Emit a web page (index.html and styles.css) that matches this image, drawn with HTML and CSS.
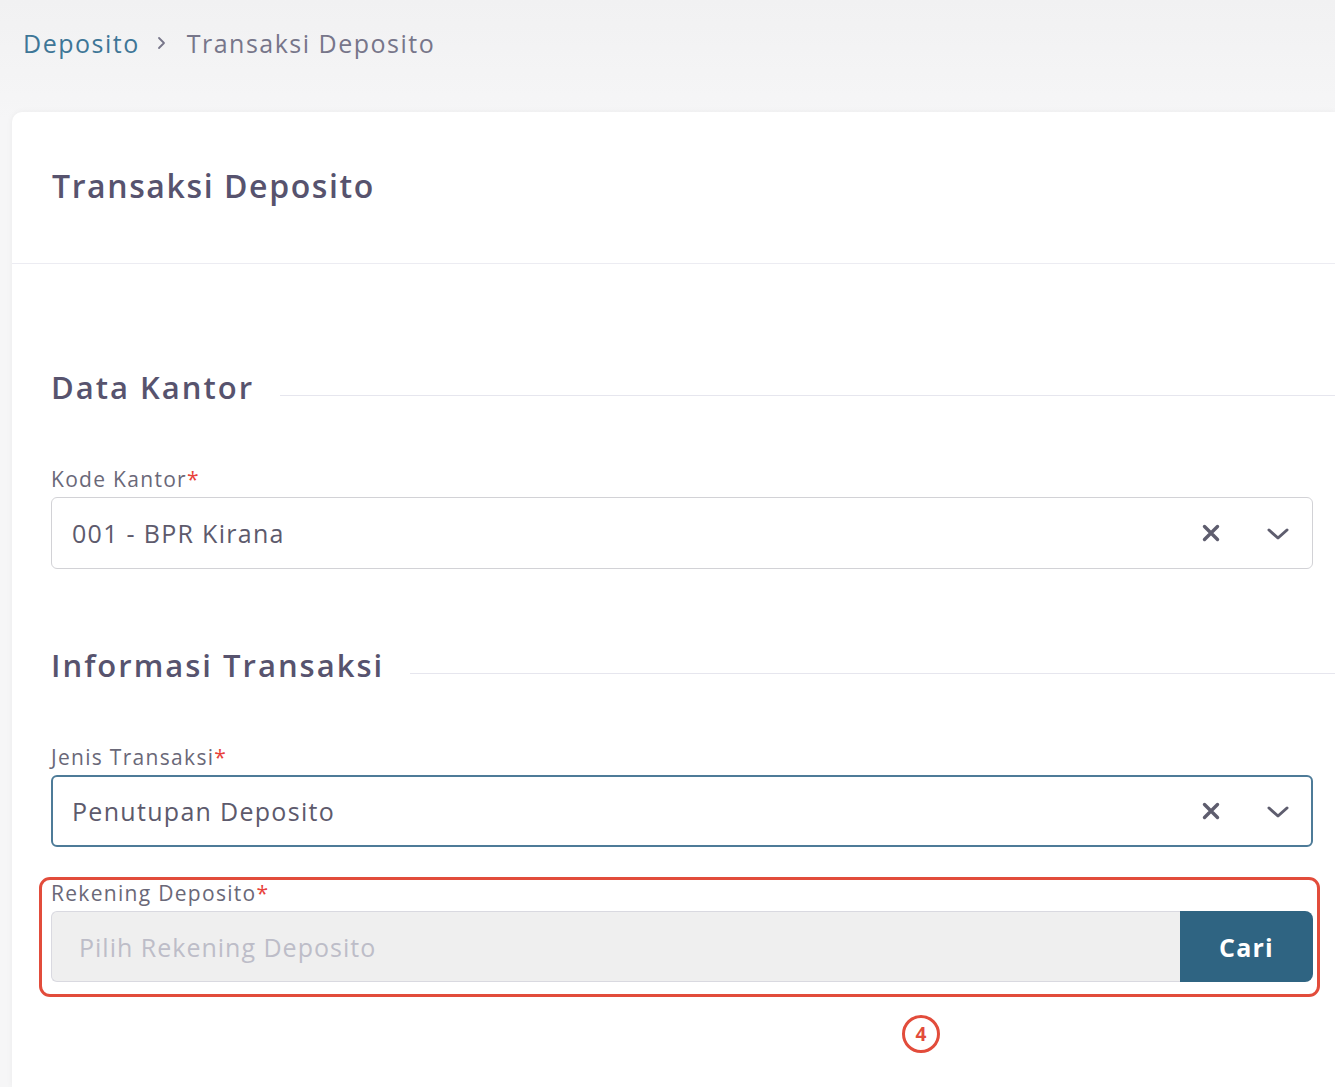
FILE: index.html
```html
<!DOCTYPE html>
<html lang="id">
<head>
<meta charset="utf-8">
<title>Transaksi Deposito</title>
<link rel="stylesheet" href="styles.css">
</head>
<body>
<div class="page">
  <nav class="crumbs">
    <a class="crumb-link" href="#">Deposito</a>
    <svg class="crumb-sep" width="12" height="14" viewBox="0 0 12 14"><path d="M3 2 L8 7 L3 12" fill="none" stroke="#77768a" stroke-width="1.8" stroke-linecap="round" stroke-linejoin="round"/></svg>
    <span class="crumb-current">Transaksi Deposito</span>
  </nav>
  <main class="card">
    <header class="card-head">
      <h1 class="card-title">Transaksi Deposito</h1>
    </header>
    <div class="card-body">
      <div class="section-title">
        <h2 class="section-name">Data Kantor</h2>
        <span class="section-rule"></span>
      </div>
      <div class="field field-first">
        <label class="field-label">Kode Kantor<span class="req">*</span></label>
        <div class="select">
          <span class="select-value">001 - BPR Kirana</span>
          <span class="select-icons">
            <svg class="ico-x" width="20" height="20" viewBox="0 0 20 20"><path d="M3.5 3.5 L16.5 16.5 M16.5 3.5 L3.5 16.5" stroke="#5e5d6e" stroke-width="3.4" stroke-linecap="round"/></svg>
            <svg class="ico-chev" width="24" height="16" viewBox="0 0 24 16"><path d="M3 4 L12 12 L21 4" fill="none" stroke="#5e5d6e" stroke-width="3" stroke-linecap="round" stroke-linejoin="round"/></svg>
          </span>
        </div>
      </div>

      <div class="section-title section-second">
        <h2 class="section-name">Informasi Transaksi</h2>
        <span class="section-rule"></span>
      </div>
      <div class="field field-first">
        <label class="field-label">Jenis Transaksi<span class="req">*</span></label>
        <div class="select select-focus">
          <span class="select-value">Penutupan Deposito</span>
          <span class="select-icons">
            <svg class="ico-x" width="20" height="20" viewBox="0 0 20 20"><path d="M3.5 3.5 L16.5 16.5 M16.5 3.5 L3.5 16.5" stroke="#5e5d6e" stroke-width="3.4" stroke-linecap="round"/></svg>
            <svg class="ico-chev" width="24" height="16" viewBox="0 0 24 16"><path d="M3 4 L12 12 L21 4" fill="none" stroke="#5e5d6e" stroke-width="3" stroke-linecap="round" stroke-linejoin="round"/></svg>
          </span>
        </div>
      </div>

      <div class="field field-marked">
        <label class="field-label">Rekening Deposito<span class="req">*</span></label>
        <div class="input-group">
          <div class="input-disabled">Pilih Rekening Deposito</div>
          <button class="btn-cari" type="button">Cari</button>
        </div>
        <span class="mark-badge">4</span>
      </div>
    </div>
  </main>
</div>
</body>
</html>
```
FILE: styles.css
```css
* { box-sizing: border-box; }
html, body { margin: 0; padding: 0; }
body {
  font-family: "Open Sans", "Liberation Sans", sans-serif;
  background: linear-gradient(180deg, #f1f1f2 0px, #f6f6f7 120px, #f6f6f7 100%);
  height: 1087px;
  overflow: hidden;
}
.page { display: flex; flex-direction: column; }
.crumbs {
  display: flex;
  align-items: center;
  height: 86px;
  padding-left: 23px;
  margin-bottom: 26px;
  font-size: 25px;
  font-weight: 500;
  letter-spacing: 1.5px;
}
.crumb-link { color: #3e7697; text-decoration: none; }
.crumb-sep { margin: 0 19px 0 16px; }
.crumb-current { color: #77768a; }

.card {
  margin-left: 12px;
  background: #fff;
  border-radius: 10px 0 0 0;
  box-shadow: 0 0 6px rgba(0,0,0,0.05);
  height: 975px;
}
.card-head {
  height: 152px;
  border-bottom: 1px solid #ececf2;
  display: flex;
  align-items: center;
  padding: 0 0 4px 40px;
}
.card-title {
  margin: 0;
  font-size: 32px;
  font-weight: 600;
  color: #57536e;
  letter-spacing: 1.6px;
}
.card-body {
  padding: 103px 22px 0 39px;
  display: flex;
  flex-direction: column;
}
.section-title {
  display: flex;
  align-items: center;
  height: 40px;
  margin-right: -22px;
}
.section-second { margin-top: 76px; }
.section-name {
  margin: 0;
  font-size: 31px;
  font-weight: 600;
  color: #57536e;
  letter-spacing: 2px;
  white-space: nowrap;
}
.section-rule {
  flex: 1;
  height: 1px;
  background: #e6e6ee;
  margin: 16px 0 0 26px;
}
.field { display: flex; flex-direction: column; }
.field-first { margin-top: 60px; }
.field-label {
  height: 24px;
  line-height: 24px;
  font-size: 21px;
  font-weight: 500;
  color: #6a6878;
  letter-spacing: 1.3px;
  margin-bottom: 6px;
}
.req { color: #e8413b; }
.select {
  height: 72px;
  border: 1px solid #d2d2d6;
  border-radius: 6px;
  display: flex;
  align-items: center;
  padding: 0 22px 0 20px;
}
.select-focus { border: 2px solid #4d7b98; padding-left: 19px; padding-right: 21px; }
.select-value {
  flex: 1;
  font-size: 25px;
  font-weight: 500;
  color: #5d5a6c;
  letter-spacing: 1.3px;
}
.select-icons { display: flex; align-items: center; gap: 44px; }
.ico-x { display: block; margin-right: 1px; }
.ico-chev { display: block; margin-top: 2px; }

.field-marked { margin-top: 34px; position: relative; }
.field-marked::after {
  content: "";
  position: absolute;
  left: -12px; right: -7px; top: -4px; bottom: -15px;
  border: 3px solid #e24c3b;
  border-radius: 11px;
  pointer-events: none;
}
.input-group { display: flex; height: 71px; }
.input-disabled {
  flex: 1;
  background: #efefef;
  border: 1px solid #d9d9e0;
  border-right: none;
  border-radius: 6px 0 0 6px;
  display: flex;
  align-items: center;
  padding-left: 27px;
  font-size: 25px;
  font-weight: 500;
  color: #bdbdc8;
  letter-spacing: 1px;
}
.btn-cari {
  width: 133px;
  border: none;
  background: #2f6482;
  color: #fff;
  font-family: inherit;
  font-size: 25px;
  font-weight: 700;
  border-radius: 0 8px 8px 0;
  letter-spacing: 1.2px;
}
.mark-badge {
  position: absolute;
  left: 851px;
  top: 134px;
  width: 38px;
  height: 38px;
  border: 3px solid #e24c3b;
  border-radius: 50%;
  color: #e24c3b;
  font-weight: 700;
  font-size: 19px;
  display: flex;
  align-items: center;
  justify-content: center;
}
```
